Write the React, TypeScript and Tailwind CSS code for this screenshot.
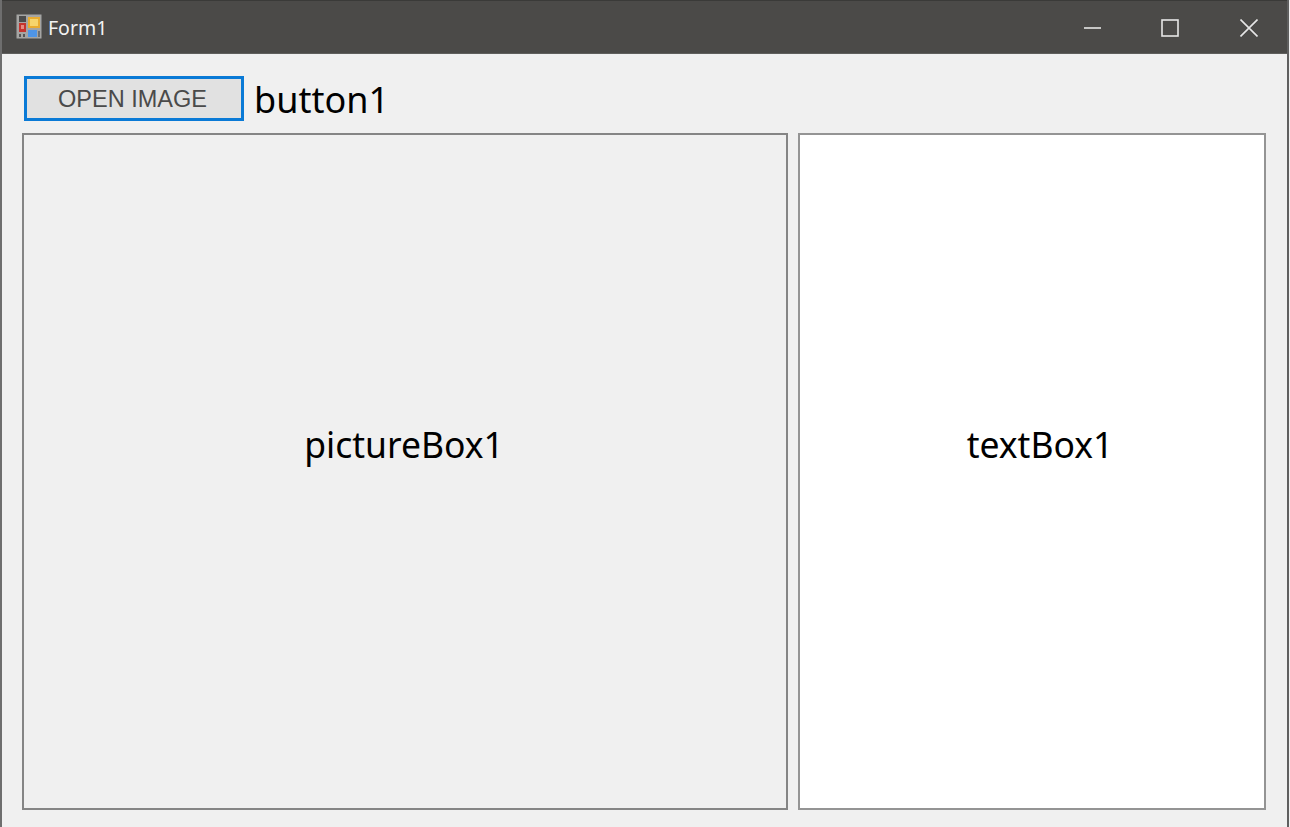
export default function App() {
  const seg = { fontFamily: '"Noto Sans", sans-serif' };
  return (
    <div className="w-[1290px] h-[827px] bg-[#f0f0f0] overflow-hidden" style={seg}>
      <div className="w-[1289px] h-[827px] flex flex-col overflow-hidden border-l-2 border-r-2 border-l-[#6e6e6e] border-r-[#5f5f5f] box-border">
        <div className="h-[54px] shrink-0 bg-[#4b4a48] border-t border-t-[#3a3a38] border-b border-b-[#5f5f5d] flex items-center pl-[14px] pt-[2px]">
          <svg width="26" height="25" viewBox="0 0 26 25" className="shrink-0 -mt-[3px]">
            <rect x="0.5" y="0.5" width="25" height="24" fill="#a5a5a3" />
            <rect x="3" y="2" width="7" height="6" fill="#4b4b4b" />
            <rect x="3" y="9" width="7" height="9" fill="#c5342e" />
            <rect x="5" y="11" width="3" height="4" fill="#e58a80" />
            <rect x="3" y="20" width="2" height="3" fill="#555555" />
            <rect x="7" y="20" width="2" height="3" fill="#555555" />
            <rect x="12" y="3" width="12" height="11" fill="#e9ac30" />
            <rect x="14" y="5" width="8" height="7" fill="#f6d56c" />
            <rect x="12" y="16" width="9" height="7" fill="#4f95e6" />
            <rect x="22" y="17" width="2" height="6" fill="#6f6f6f" />
          </svg>
          <span className="ml-[6px] text-[19.5px] leading-none text-[#f2f2f2]">Form1</span>
          <div className="ml-auto flex items-center">
            <svg width="17" height="18" viewBox="0 0 17 18" className="mr-[60px]" fill="none" stroke="#e6e6e6" strokeWidth="1.6">
              <path d="M0 9 H17" />
            </svg>
            <svg width="18" height="18" viewBox="0 0 18 18" className="mr-[61px]" fill="none" stroke="#e6e6e6" strokeWidth="1.6">
              <rect x="1" y="1" width="16" height="16" />
            </svg>
            <svg width="18" height="18" viewBox="0 0 18 18" className="mr-[29px]" fill="none" stroke="#e6e6e6" strokeWidth="1.6">
              <path d="M0.5 0.5 L17.5 17.5 M17.5 0.5 L0.5 17.5" />
            </svg>
          </div>
        </div>
        <div className="flex flex-col flex-1 pl-[20px]">
          <div className="flex items-center h-[45px] mt-[22px] ml-[2px]">
            <button className="w-[220px] h-[45px] border-[3px] border-[#0a7ad6] bg-[#e1e1e1] text-[23.5px] leading-none text-[#4a4a4a] flex items-center justify-center pt-[3px] pr-[3px]" style={{ fontFamily: '"Liberation Sans", sans-serif' }}>
              OPEN IMAGE
            </button>
            <span className="ml-[10px] text-[36px] leading-none text-black mt-[2px]">button1</span>
          </div>
          <div className="flex mt-[12px] gap-[10px] h-[677px]">
            <div className="w-[766px] border-2 border-[#858585] bg-[#f0f0f0] flex items-center justify-center text-[35.5px] text-black pb-[54px] pr-[2px]">pictureBox1</div>
            <div className="w-[468px] border-2 border-[#949494] bg-white flex items-center justify-center text-[35.5px] text-black pb-[54px] pl-[16px]">textBox1</div>
          </div>
        </div>
      </div>
    </div>
  );
}
